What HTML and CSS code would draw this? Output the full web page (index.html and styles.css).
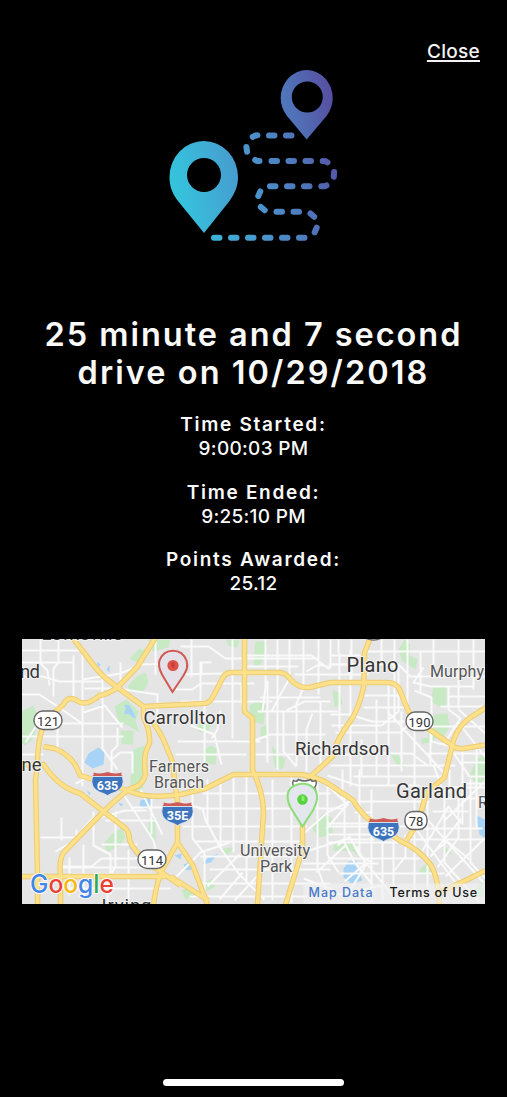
FILE: index.html
```html
<!DOCTYPE html>
<html lang="en">
<head>
<meta charset="utf-8">
<title>Drive details</title>
<link rel="stylesheet" href="styles.css">
</head>
<body>
<main class="screen">
  <header class="topbar"><a class="close" href="#">Close</a></header>

  <svg class="route-art" viewBox="150 60 200 190" aria-hidden="true">
    <defs>
      <linearGradient id="route" gradientUnits="userSpaceOnUse" x1="170" y1="160" x2="337" y2="125">
        <stop offset="0" stop-color="#35c3dc"/>
        <stop offset=".45" stop-color="#4b94cc"/>
        <stop offset=".75" stop-color="#5074b9"/>
        <stop offset="1" stop-color="#5650a2"/>
      </linearGradient>
    </defs>
    <g fill="url(#route)" fill-rule="evenodd">
      <path d="M204 233L178 201C172 193 169.500 186 169.500 177A34.250 36 0 0 1 238 177C238 186 235 193 229.500 201ZM204 158a17 17 0 1 0 0 34a17 17 0 1 0 0-34Z"/>
      <path d="M306.700 139.500L287 116C282.500 110 280.700 104 280.700 98A26 28 0 0 1 332.700 98C332.700 104 331 110 326.500 116ZM307.300 81.500a15.500 15.500 0 1 0 0 31a15.500 15.500 0 1 0 0-31Z"/>
    </g>
    <path fill="none" stroke="url(#route)" stroke-width="6" stroke-linecap="round" d="M214 237.700h5.500M231 237.700h5.500M248 237.700h5.500M265 237.700h5.500M282 237.700h5.500M299 237.700h5.500M314.700 232.300l2-4.600M310.500 213.500l3.700 3.200M293.500 211.800h5.500M276.500 211.800h5.500M260.800 207l3.900 3.200M258.300 196l2-4.600M270 186.300h5.500M287 186.300h5.500M304 186.300h5.500M321.300 186.300h3.200l2-.900M333.800 176.700l.300-4.600M322.700 160.900l2.800.300 2 1.100M305.500 161h5.500M288.500 161h5.500M271.500 161h5.500M255.200 160l2 1h2.300M246.400 147l.700 4.700M252.700 136.900l2.200-1.200 2.600-.4M269 135.400h5.500M286 135.400h5.500"/>
  </svg>

  <h1 class="title"><span class="title-first">25 minute and 7 second</span><span class="title-second">drive on 10/29/2018</span></h1>

  <dl class="facts">
    <div class="fact"><dt>Time Started:</dt><dd>9:00:03 PM</dd></div>
    <div class="fact"><dt>Time Ended:</dt><dd>9:25:10 PM</dd></div>
    <div class="fact"><dt>Points Awarded:</dt><dd>25.12</dd></div>
  </dl>

  <svg class="map" viewBox="21.500 639.500 463.500 264.500" role="img" aria-label="Map of the drive">
    <defs>
      <g id="interstate">
        <path d="M-15-7.500Q-13-9-14-11Q-7-9 0-11.500Q7-9 14-11Q13-9 15-7.500Z" fill="#cf5b58"/>
        <path d="M-15-7H15Q18 4 8 8.500Q3 10 0 12Q-3 10-8 8.500Q-18 4-15-7Z" fill="#3d74bd" stroke="#e7edf6" stroke-width=".8"/>
      </g>
    </defs>
    <rect x="21" y="639" width="465" height="266" fill="#e5e5e5"/>
    <g fill="#c7e9c4">
      <path d="M21 712l12-6 4 10-3 22-9 8-4-2ZM136 677l9-4 3 9-5 10-13 1-3-6ZM114 707l12-7 12 12-3 9 4 12-11-7-10-2ZM133 750l11-4 3 22-6 18-11-4ZM120 731h13v14h-12ZM148 640h22l-2 8-16 4ZM129 659l10-10 8 3-5 14ZM255 642h12l-4 17-5 9-5-4ZM249 706l8-5 8 4-2 20-13-4ZM260 728l8-3-2 13-6-2ZM197 724l14 1-4 9-9-2ZM202 752l8-6 6 3-1 16-11-1ZM271 746l8 10 6 4-3 10-8-2ZM225 640l14 1-2 7-8-1ZM404 640l6 5-1 11 8 4-2 10-13-8-4-12ZM433 687h13v20h-8l-8-6ZM434 715l13-1 2 14-8 12-14-3ZM421 739l12-2 1 6-13 1ZM332 690l8 4 2 10-8 4ZM389 753l9 3 7 12-8-2ZM476 760l9-6v22l-8 14-7-16ZM149 820l6-4v27l-8-9ZM130 776l9-8 7 8-5 16-11-1ZM103 844l9-10 9-6 4 10-5 8-13 6ZM314 822l9-8 9 5v16l-13 3-7-8ZM333 846l11-6 10 6-2 6-19-1ZM351 850l9-2-2 10ZM419 870l8-7 6 5-5 8-9-1ZM439 840l13 16-7-3ZM204 883l8-4 3 8-9 5ZM220 850l15-3-9 9ZM181 891l9-4 5 9-10 4ZM154 850l8 8-7 6-9-5ZM473 894l9-13 2 18Z"/>
    </g>
    <g fill="#a7d3f6">
      <path d="M88 754l10-6 6 5-1 12-11 4-8-6ZM343 869l5-7 8-1 2 11 4 9-11 3-8-6ZM475 815l11 6v18l-7-4ZM124 705l5 1 3 5 4 8-5-2-5-5ZM140 801l9-3 3 6-7 6-6-4ZM203 862l7-5 8-3-8 9-8 2ZM183 865l6-2 2 7-5 1ZM174 856l7-2-1 6ZM124 710l4 4-4 1ZM106 670l3-4v7ZM96 662l4 3-2 3ZM99 706l3-3-2 6ZM133 848l10 10 4 7-10-7-9-11ZM118 803l5 2-3 2ZM86 791l4 2-1 3Z"/>
    </g>
    <g class="streets">
      <path d="M40 640v24l7 7 2 15M58 640v23l-5 6v28M73 656v41M82 652v135M102 674v75l15 21M21 651h62M21 663h52M21 677h21l17 5h43M21 695h18l24 16 20 14M25 743l20-31M57 712v37M21 737h102M37 724h86M84 689h28M83 713l21-7 18 22M82 680l38-6 21-9 39-1M155 640v35M123 690l34 5v24M117 728v18l-6 6v24M111 760l9-7h12v21M21 755h22M75 784l13-6M120 663v27M61 806M40 838h35l16-18 34-9h21M55 852l21-12v-10M69 858v38M83 845v51M60 889h110M59 868h102M72 875h80M93 812v34l17 9v40M101 845h36M115 812v55l-8 14v21M128 850v52M105 821h50M123 795l30 46 6 28M140 790l22 45M130 808h49M151 797v38M62 867h29l10-8h61M61 818v23"/>
      <path d="M170 675l54-1M180 647h28l17 12h93M191 640v38M201 663v12M211 663h-11v43M232 640v99M241 683v19l4 10M175 690h17l8-6h54M180 702h92M204 706v65M220 711l-3 19-6 9M190 726l24 9 7 30M177 742h83M175 755h71M265 640v48l-3 24M260 698h60M257 712h80M267 681v82M277 640v130M289 640v39l-9 16-9 17M303 640v48l-7 16v62M318 640v55M330 640v28l-12-3-12 7M246 656h65l18 14M246 667h52M294 675h74M286 711l18-9h26M254 741l16-6h55M255 755h95M283 713v39l13 15M312 714l-6 16v42M320 703v67M339 653v78M350 650v67M331 665h32M330 656h30"/>
      <path d="M338 640v13M351 640v40M381 640v25M394 640v83M407 640v66M420 653v39M433 640v35M458 640v69M473 640v50M328 665h70l12 12h76M362 652h123M398 666v46l-17 14h-50M363 696h38M363 708h44M330 715h20l21 7h48M335 733h65l18-16M388 684v102M376 700v77M350 724v63M361 740v37M401 712v60M414 727v58M430 726v41M365 754h46l16 12M330 766h125M353 777h91M414 691l17 7v44l29 7M423 668l-10 15 17 4h42M448 687v23l12 9-17 26M440 707h45M448 697h39M407 727h78M457 722l29 37M458 710l28 25M387 712l56 61M462 747v78M476 744v84M450 749l19 28h17M433 765l11 32M427 754h59M460 763h26"/>
      <path d="M192 785v54l12 15v40M207 780v44l12 23 19 27 26 26M220 780v69M233 775v78M246 775v108M272 780v121M291 778v125M317 784v84l12 34M327 786v69l11 18M344 797v46l10 20 18 22M202 794h128M197 809h146M182 827h125M194 842h108M200 857h98M209 870h121M196 884h134M189 897h140M176 877l24-24 29-10M207 887l32-32M234 901l28-30M219 900l23-27M182 804l20 5 4 15M302 835l25-22 26-13M302 853l42-13h30M302 864h76M303 879l29 11M326 824h47M326 835h51M316 873l30-28M332 896l50-10"/>
      <path d="M326 785l21 20-21 24M342 770v30M359 770v85l36 45M371 790v113M382 833v67M393 840v46M405 835v22l-12 15M414 782v121M427 802v87M444 790v73l35 40M458 788v50l-21 30M470 780v83l15 16M327 776l30 10h62M354 802h75M354 813h17M327 827h82M327 843h72M327 859h92M339 874h105M408 840h78M416 829h66M422 851l26-44 13 17M430 857l31-38M425 818l58 65M415 829l42 57M445 877l39-38M434 852l13-10 22 18M443 822l40-39M356 847l9 17-21 18M367 863l-19 30M443 788h42M444 799h41M449 770v23M462 784h24M432 812h36M337 846l12-9 10 19 12 7"/>
    </g>
    <g>
      <g class="road road-edge">
        <path d="M72 638L91 663Q97 671 103 677L117 688 143 707M155 638L137 667 117 688Q107 695 99 696Q86 707 78 702Q67 695 63 705L48 718Q37 732 37 765L35 780 37 878 37 905M143 707L203 704Q209 704 212 698L223 677Q226 673 231 673H280Q286 674 290 680Q298 689 309 688L330 683H386Q396 683 399 690L408 712Q413 720 429 730L449 744Q455 750 463 749L487 745"/>
        <path d="M143 707V718Q150 731 149 744Q142 755 145 775Q142 787 130 789Q121 795 103 812L65 851Q58 857 60 877V905M153 723L162 738Q167 750 172 762L177 803V843L162 870Q156 882 153 905M177 843L192 865 207 905M21 765H43Q58 788 80 794L103 812 124 828Q129 832 129 841Q133 851 148 864L180 886M43 747L54 749Q65 753 74 764L80 776 127 791Q146 800 180 795L205 789 233 775H300Q319 778 329 785L353 801Q357 809 366 818L399 841Q419 850 430 865Q438 878 439 905"/>
        <path d="M244 638V712L252 719 252 770Q263 793 263 814L257 905M370 638L364 653Q364 672 363 688Q359 707 351 720Q336 739 332 757L310 777 302 805V849Q297 867 285 905M487 707L467 720Q454 731 451 749L444 778 426 793Q423 805 417 824L406 841M487 870L467 880 439 893M21 877H165M170 877L208 901"/>
      </g>
      <g class="road road-fill">
        <path d="M72 638L91 663Q97 671 103 677L117 688 143 707M155 638L137 667 117 688Q107 695 99 696Q86 707 78 702Q67 695 63 705L48 718Q37 732 37 765L35 780 37 878 37 905M143 707L203 704Q209 704 212 698L223 677Q226 673 231 673H280Q286 674 290 680Q298 689 309 688L330 683H386Q396 683 399 690L408 712Q413 720 429 730L449 744Q455 750 463 749L487 745"/>
        <path d="M143 707V718Q150 731 149 744Q142 755 145 775Q142 787 130 789Q121 795 103 812L65 851Q58 857 60 877V905M153 723L162 738Q167 750 172 762L177 803V843L162 870Q156 882 153 905M177 843L192 865 207 905M21 765H43Q58 788 80 794L103 812 124 828Q129 832 129 841Q133 851 148 864L180 886M43 747L54 749Q65 753 74 764L80 776 127 791Q146 800 180 795L205 789 233 775H300Q319 778 329 785L353 801Q357 809 366 818L399 841Q419 850 430 865Q438 878 439 905"/>
        <path d="M244 638V712L252 719 252 770Q263 793 263 814L257 905M370 638L364 653Q364 672 363 688Q359 707 351 720Q336 739 332 757L310 777 302 805V849Q297 867 285 905M487 707L467 720Q454 731 451 749L444 778 426 793Q423 805 417 824L406 841M487 870L467 880 439 893M21 877H165M170 877L208 901"/>
      </g>
    </g>

    <g class="shields">
      <rect x="33.500" y="711.500" width="28" height="18.500" rx="9"/>
      <rect x="405.500" y="712.500" width="27" height="18.500" rx="9"/>
      <rect x="137.500" y="850.500" width="28" height="18.500" rx="9"/>
      <rect x="404.500" y="812" width="22" height="18" rx="8"/>
      <path d="M293 781q3 2 5-1q6 3 12 0q2 3 5 1q2 3-1 7q4 7-2 10h-16q-6-3-2-10q-3-4-1-7Z"/>
      <path d="M364 634q9 7 18 0v4q-9 5-18 0Z"/>
    </g>
    <use href="#interstate" x="107" y="784"/>
    <use href="#interstate" x="177" y="814"/>
    <use href="#interstate" x="383" y="830"/>
    <g class="shield-text">
      <text x="47.500" y="726">121</text><text x="419" y="727">190</text><text x="151.500" y="865">114</text><text x="415.500" y="826">78</text>
    </g>
    <g class="interstate-text">
      <text x="107" y="790">635</text><text x="177" y="820">35E</text><text x="383" y="836">635</text>
    </g>

    <g class="city">
      <text x="41" y="640" textLength="81">Lewisville</text>
      <text x="19.500" y="678" textLength="20">nd</text>
      <text x="21" y="771.500" textLength="20">ne</text>
      <text x="143" y="724" textLength="82.500">Carrollton</text>
      <text x="294.500" y="755.500" textLength="94.500">Richardson</text>
      <text class="city-large" x="346" y="672.500" textLength="52">Plano</text>
      <text class="city-large" x="395.500" y="798" textLength="71">Garland</text>
      <text x="101" y="912" textLength="50">Irving</text>
    </g>
    <g class="suburb">
      <text x="429.500" y="677" textLength="54">Murphy</text>
      <text x="148.500" y="772.500" textLength="60">Farmers</text>
      <text x="153.500" y="788.500" textLength="50">Branch</text>
      <text x="239.500" y="856.500" textLength="70">University</text>
      <text x="259.500" y="872.500" textLength="32">Park</text>
      <text x="477.500" y="808">R</text>
    </g>

    <path d="M172 692.500L161.500 675C158 668 158 664 159 661C164 648 181 648 186 661C188 667 186 671 183 676Z" fill="#e4e1e9" stroke="#cf5b53" stroke-width="2"/>
    <circle cx="172.500" cy="666" r="5.600" fill="#de5147"/>
    <path d="M171 663h3v5h-3Z" fill="#c53f37"/>
    <path d="M302 827L290 808C286 800 286 792 291 788C299 782 310 783 315 791C319 799 315 804 313 810Z" fill="#e4e7ee" stroke="#8bdd78" stroke-width="2"/>
    <circle cx="302" cy="800" r="5.200" fill="#54d33d"/>
    <path d="M301 796l3 1v5l-3-1Z" fill="#8aee6e"/>

    <g class="google"><text x="29.500" y="893" textLength="84" lengthAdjust="spacingAndGlyphs"><tspan fill="#4285e8">G</tspan><tspan fill="#e94235">o</tspan><tspan fill="#f6b912">o</tspan><tspan fill="#4285e8">g</tspan><tspan fill="#34a853">l</tspan><tspan fill="#e94235">e</tspan></text></g>
    <rect x="303" y="884" width="182" height="20" fill="#f1f1f1" opacity=".65"/>
    <g class="credit"><text x="308" y="897.500" textLength="64" fill="#4778ca">Map Data</text><text x="389" y="897.500" textLength="87.500" fill="#191919">Terms of Use</text></g>
  </svg>
  <div class="home-bar"></div>
</main>
</body>
</html>
```
FILE: styles.css
```css
* { box-sizing: border-box; }
body { margin: 0; background: #000; color: #fafafa; font-family: Inter, "Liberation Sans", sans-serif; }
.screen { display: flex; flex-direction: column; align-items: center; width: 507px; height: 1097px; overflow: hidden; }
.topbar { display: flex; justify-content: flex-end; width: 100%; height: 60px; padding: 40px 27px 0 0; flex: none; }
.close { color: #f4f4f4; font-size: 19px; line-height: 24px; font-weight: 500; letter-spacing: .3px; text-decoration: underline; text-decoration-thickness: 1.500px; text-underline-offset: 2px; }
.route-art { display: block; width: 200px; height: 190px; margin-right: 7px; flex: none; }
.title { display: flex; flex-direction: column; align-items: center; margin: 66px 0 0; font-size: 32.500px; line-height: 38px; font-weight: 600; white-space: nowrap; }
.title-first { letter-spacing: 1.950px; }
.title-second { letter-spacing: 2.050px; }
.facts { display: flex; flex-direction: column; gap: 19px; margin: 21px 0 0; text-align: center; font-size: 19px; }
.fact dt { font-weight: 600; line-height: 24px; letter-spacing: 1.700px; }
.fact dd { margin: 0; font-weight: 500; line-height: 24.500px; letter-spacing: .3px; }
.map { display: block; width: 463.500px; height: 264.500px; margin-top: 42.500px; flex: none; overflow: hidden; }
.streets { fill: none; stroke: #fafafa; stroke-width: 2; stroke-linejoin: round; }
.road { fill: none; stroke-linejoin: round; }
.road-edge { stroke: #edcb70; stroke-width: 5.500; }
.road-fill { stroke: #fce18a; stroke-width: 3.500; }
.shields { fill: #fff; stroke: #666; stroke-width: 1.400; }
.shield-text { font: 13px Roboto, sans-serif; fill: #333; text-anchor: middle; }
.interstate-text { font: bold 12.500px Roboto, sans-serif; fill: #fff; text-anchor: middle; }
.city { font: 18.500px Roboto, sans-serif; fill: #353535; stroke: #f3f3f3; stroke-width: 2px; paint-order: stroke; }
.city-large { font-size: 20px; }
.suburb { font: 16px Roboto, sans-serif; fill: #555; stroke: #f3f3f3; stroke-width: 2px; paint-order: stroke; }
.google { font: 500 25px Inter, sans-serif; stroke: #fafafa; stroke-width: 2px; paint-order: stroke; }
.credit { font: 500 12.500px Inter, sans-serif; }
.home-bar { width: 181px; height: 7px; margin-top: 175px; border-radius: 4px; background: #fff; flex: none; }
```
